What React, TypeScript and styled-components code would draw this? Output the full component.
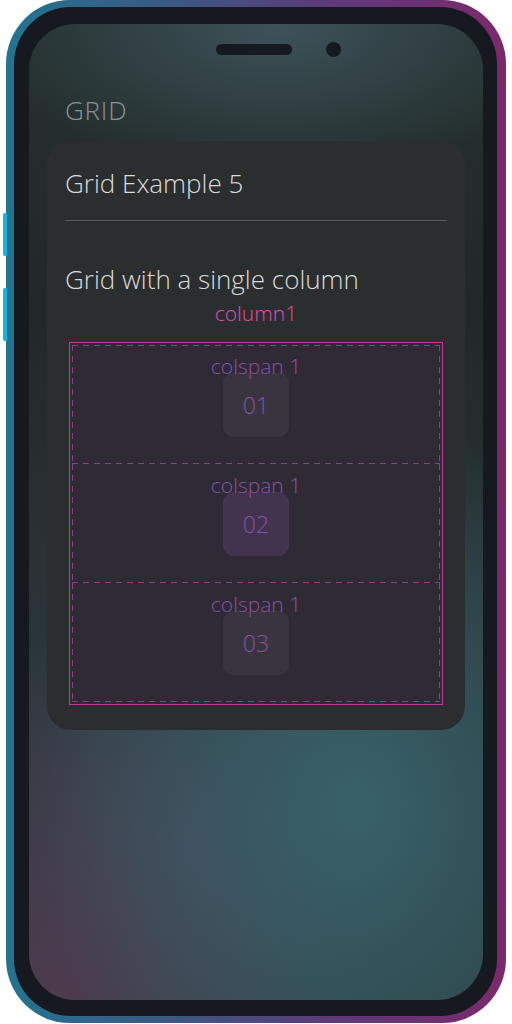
import React from "react";
import styled, { createGlobalStyle } from "styled-components";

const colors = {
  page: "#ffffff",
  bezel: "#161920",
  card: "#2b2e2f",
  heading: "#8c9192",
  title: "#d9dadb",
  divider: "#55595a",
  pink: "#e24bb0",
  gridLine: "#b8409a",
  dash: "#8e3c84",
  gridBg: "#2e2b35",
  purple: "#8a4fa8",
};

const font = `"Open Sans", "Lato", sans-serif`;

const GlobalStyle = createGlobalStyle`
  body {
    margin: 0;
    background: ${colors.page};
    font-family: ${font};
  }
`;

const Phone = styled.div`
  position: relative;
  box-sizing: border-box;
  width: 500px;
  height: 1023px;
  margin-left: 6px;
  padding: 7px 9px 7px 8px;
  border-radius: 64px;
  background: linear-gradient(90deg, #23748f 0%, #3e5682 35%, #5d3a78 65%, #7c296c 100%);
`;

const SideButton = styled.div<{ $top: number; $height: number }>`
  position: absolute;
  left: -3px;
  top: ${({ $top }) => $top}px;
  width: 4px;
  height: ${({ $height }) => $height}px;
  border-radius: 2px 0 0 2px;
  background: #16b3dc;
`;

const Bezel = styled.div`
  box-sizing: border-box;
  height: 100%;
  padding: 17px 14px 16px 15px;
  border-radius: 57px;
  background: ${colors.bezel};
`;

const Screen = styled.div`
  position: relative;
  box-sizing: border-box;
  height: 100%;
  padding: 0 18px;
  border-radius: 46px;
  overflow: hidden;
  background:
    radial-gradient(ellipse 65% 16% at 55% 0%, rgba(62, 84, 92, 0.95) 0%, rgba(62, 84, 92, 0) 100%),
    radial-gradient(ellipse 70% 40% at 72% 80%, rgba(56, 98, 106, 1) 0%, rgba(56, 98, 106, 0) 100%),
    radial-gradient(ellipse 60% 35% at 5% 100%, rgba(80, 58, 78, 0.9) 0%, rgba(80, 58, 78, 0) 100%),
    radial-gradient(ellipse 50% 30% at 35% 85%, rgba(72, 80, 100, 0.7) 0%, rgba(72, 80, 100, 0) 100%),
    linear-gradient(180deg, #26302f 0%, #212928 30%, #2a3438 60%, #2d3f44 100%);
`;

const Notch = styled.div`
  display: flex;
  justify-content: center;
  align-items: center;
  gap: 34px;
  padding-top: 18px;
  padding-left: 45px;
`;

const Speaker = styled.div`
  width: 76px;
  height: 11px;
  border-radius: 6px;
  background: ${colors.bezel};
`;

const Camera = styled.div`
  width: 15px;
  height: 15px;
  border-radius: 50%;
  background: ${colors.bezel};
`;

const Heading = styled.div`
  margin-top: 38px;
  padding-left: 18px;
  font-size: 26px;
  line-height: 30px;
  font-weight: 300;
  letter-spacing: 0.8px;
  color: ${colors.heading};
`;

const Card = styled.div`
  margin-top: 16px;
  padding: 27px 18px 25px;
  border-radius: 24px;
  background: ${colors.card};
`;

const Title = styled.div`
  font-size: 26px;
  line-height: 30px;
  font-weight: 300;
  color: ${colors.title};
`;

const Divider = styled.div`
  height: 1px;
  margin-top: 22px;
  background: ${colors.divider};
`;

const Subtitle = styled(Title)`
  margin-top: 43px;
`;

const ColumnLabel = styled.div`
  margin-top: 7px;
  text-align: center;
  font-size: 21px;
  line-height: 24px;
  font-weight: 300;
  color: ${colors.pink};
`;

const Grid = styled.div`
  display: grid;
  grid-template-columns: 1fr;
  margin: 17px 4px 0;
  padding: 2px;
  border: 1px solid ${colors.gridLine};
  background: ${colors.gridBg};
`;

const dashH = `repeating-linear-gradient(90deg, ${colors.dash} 0 6px, transparent 6px 11px)`;
const dashV = `repeating-linear-gradient(180deg, ${colors.dash} 0 6px, transparent 6px 11px)`;

const Cell = styled.div<{ $first?: boolean }>`
  position: relative;
  box-sizing: border-box;
  height: 119px;
  display: flex;
  justify-content: center;
  align-items: center;
  background-image: ${({ $first }) =>
    $first ? `${dashH}, ${dashH}, ${dashV}, ${dashV}` : `${dashH}, ${dashV}, ${dashV}`};
  background-repeat: no-repeat;
  background-size: ${({ $first }) =>
    $first ? "100% 1px, 100% 1px, 1px 100%, 1px 100%" : "100% 1px, 1px 100%, 1px 100%"};
  background-position: ${({ $first }) =>
    $first ? "left top, left bottom, left top, right top" : "left bottom, left top, right top"};
`;

const Tile = styled.div<{ $active?: boolean }>`
  width: 66px;
  height: 64px;
  display: flex;
  justify-content: center;
  align-items: center;
  border-radius: 11px;
  background: ${({ $active }) =>
    $active ? "rgba(140, 80, 170, 0.22)" : "rgba(255, 255, 255, 0.05)"};
  font-size: 23px;
  font-weight: 300;
  color: ${colors.purple};
`;

const SpanLabel = styled.div`
  position: absolute;
  top: 9px;
  left: 0;
  right: 0;
  text-align: center;
  font-size: 21px;
  line-height: 24px;
  font-weight: 300;
  color: ${colors.purple};
  z-index: 1;
`;

const items = [
  { id: "01", active: false },
  { id: "02", active: true },
  { id: "03", active: false },
];

const App = () => (
  <>
    <GlobalStyle />
    <Phone>
      <SideButton $top={213} $height={43} />
      <SideButton $top={288} $height={53} />
      <Bezel>
        <Screen>
          <Notch>
            <Speaker />
            <Camera />
          </Notch>
          <Heading>GRID</Heading>
          <Card>
            <Title>Grid Example 5</Title>
            <Divider />
            <Subtitle>Grid with a single column</Subtitle>
            <ColumnLabel>column1</ColumnLabel>
            <Grid>
              {items.map((item, i) => (
                <Cell key={item.id} $first={i === 0}>
                  <SpanLabel>colspan 1</SpanLabel>
                  <Tile $active={item.active}>{item.id}</Tile>
                </Cell>
              ))}
            </Grid>
          </Card>
        </Screen>
      </Bezel>
    </Phone>
  </>
);

export default App;
